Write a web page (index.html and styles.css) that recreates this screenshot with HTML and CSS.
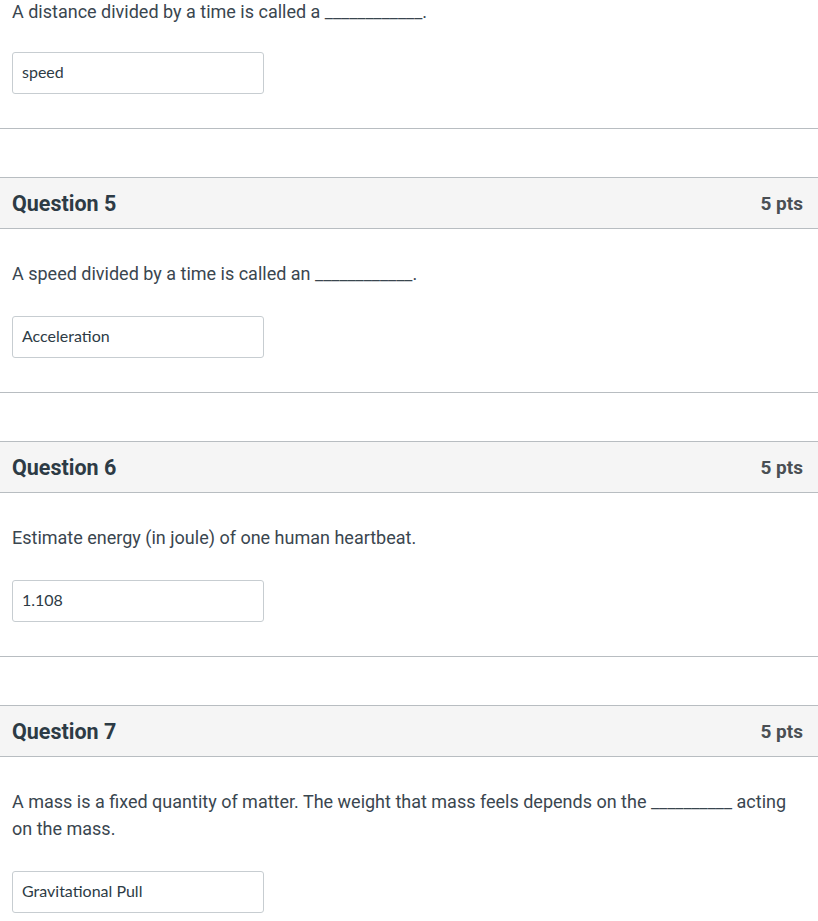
FILE: index.html
```html
<!DOCTYPE html>
<html lang="en">
<head>
<meta charset="utf-8">
<title>Quiz</title>
<link rel="stylesheet" href="styles.css">
</head>
<body>
<div class="quiz">
  <section class="question question-first">
    <div class="q-body">
      <p class="q-text">A distance divided by a time is called a ____________.</p>
      <div class="answer">speed</div>
    </div>
  </section>

  <section class="question">
    <header class="q-header">
      <h2 class="q-title">Question 5</h2>
      <span class="q-pts">5 pts</span>
    </header>
    <div class="q-body">
      <p class="q-text">A speed divided by a time is called an ____________.</p>
      <div class="answer">Acceleration</div>
    </div>
  </section>

  <section class="question">
    <header class="q-header">
      <h2 class="q-title">Question 6</h2>
      <span class="q-pts">5 pts</span>
    </header>
    <div class="q-body">
      <p class="q-text">Estimate energy (in joule) of one human heartbeat.</p>
      <div class="answer">1.108</div>
    </div>
  </section>

  <section class="question">
    <header class="q-header">
      <h2 class="q-title">Question 7</h2>
      <span class="q-pts">5 pts</span>
    </header>
    <div class="q-body">
      <p class="q-text">A mass is a fixed quantity of matter. The weight that mass feels depends on the __________ acting on the mass.</p>
      <div class="answer">Gravitational Pull</div>
    </div>
  </section>
</div>
</body>
</html>
```
FILE: styles.css
```css
html, body {
  margin: 0;
  padding: 0;
  background: #ffffff;
}

body {
  font-family: Roboto, "Noto Sans", Arial, sans-serif;
  color: #2d3b45;
}

.quiz {
  display: flex;
  flex-direction: column;
  gap: 48px;
}

.question {
  border-bottom: 1px solid #b8bdc1;
}

.q-header {
  display: flex;
  align-items: center;
  justify-content: space-between;
  height: 50px;
  padding: 0 15px 0 12px;
  background: #f5f5f5;
  border-top: 1px solid #b8bdc1;
  border-bottom: 1px solid #b8bdc1;
}

.q-title {
  margin: 0;
  font-size: 21.5px;
  font-weight: 700;
  color: #2d3b45;
}

.q-pts {
  font-size: 19px;
  font-weight: 700;
  color: #4a4f53;
}

.q-body {
  padding: 31px 12px 34px 12px;
}

.question-first .q-body {
  padding-top: 0;
}

.question-first .q-text {
  line-height: 23px;
}

.q-text {
  margin: 0 0 29px 0;
  font-size: 18px;
  line-height: 27px;
  font-weight: 400;
  color: #3a464f;
}

.answer {
  box-sizing: border-box;
  width: 252px;
  height: 42px;
  display: flex;
  align-items: center;
  padding: 0 9px 4px 9px;
  border: 1px solid #c7cdd1;
  border-radius: 3px;
  font-family: Lato, "Noto Sans", sans-serif;
  font-size: 16px;
  color: #2d3b45;
}
```
